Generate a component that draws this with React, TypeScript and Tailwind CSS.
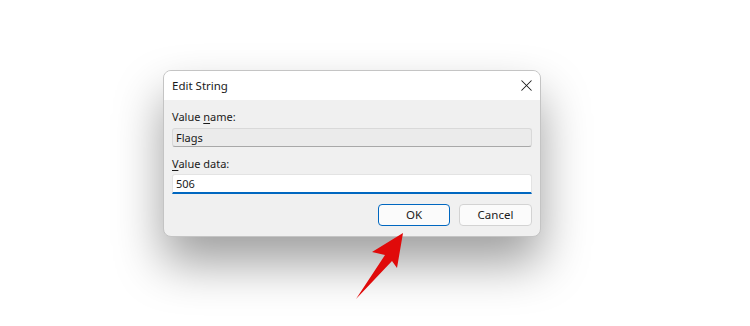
import { X } from "lucide-react";

export default function App() {
  return (
    <div
      className="relative w-[750px] h-[326px] bg-white overflow-hidden pt-[70px] pl-[163px]"
      style={{ fontFamily: '"Noto Sans", "Open Sans", sans-serif' }}
    >
      {/* dialog */}
      <div className="w-[378px] rounded-lg border border-[#c4c4c4] bg-[#f0f0f0] shadow-[0_26px_48px_rgba(0,0,0,0.38)] overflow-hidden">
        <div className="h-[29px] bg-white flex items-center justify-between pl-[8px] pr-[4px]">
          <span className="text-[11.5px] text-[#1a1a1a]">Edit String</span>
          <X size={19} strokeWidth={1.3} className="text-[#1a1a1a]" />
        </div>
        <div className="px-[8px] pt-[9px] pb-[10px] text-[11px] text-[#1a1a1a]">
          <div className="h-[15px] leading-[15px]">
            Value <span className="underline underline-offset-2">n</span>ame:
          </div>
          <div className="mt-[4px] h-[19px] rounded-[3px] border border-[#d9d9d9] border-b-[#a8a8a8] bg-[#ebebeb] px-[3px] leading-[17px]">
            Flags
          </div>
          <div className="mt-[9px] h-[15px] leading-[15px]">
            <span className="underline underline-offset-2">V</span>alue data:
          </div>
          <div className="mt-[3px] h-[20px] rounded-t-[3px] border border-[#e3e3e3] border-b-2 border-b-[#0067c0] bg-white px-[3px] leading-[17px]">
            506
          </div>
          <div className="mt-[10px] flex justify-end gap-[9px]">
            <button className="w-[72px] h-[22px] rounded-[4px] border border-[#0067c0] bg-[#fbfbfb] text-[11.5px] leading-[18px] text-[#1a1a1a]">
              OK
            </button>
            <button className="w-[73px] h-[22px] rounded-[4px] border border-[#d3d3d3] bg-[#fbfbfb] text-[11.5px] leading-[18px] text-[#1a1a1a]">
              Cancel
            </button>
          </div>
        </div>
      </div>

      {/* red arrow */}
      <svg className="absolute left-0 top-0" width="750" height="326" viewBox="0 0 750 326">
        <path
          d="M403 233 L372 252 L385 255 L356 299 L392 261 L397 268 Z"
          fill="#e00a0a"
        />
      </svg>
    </div>
  );
}
